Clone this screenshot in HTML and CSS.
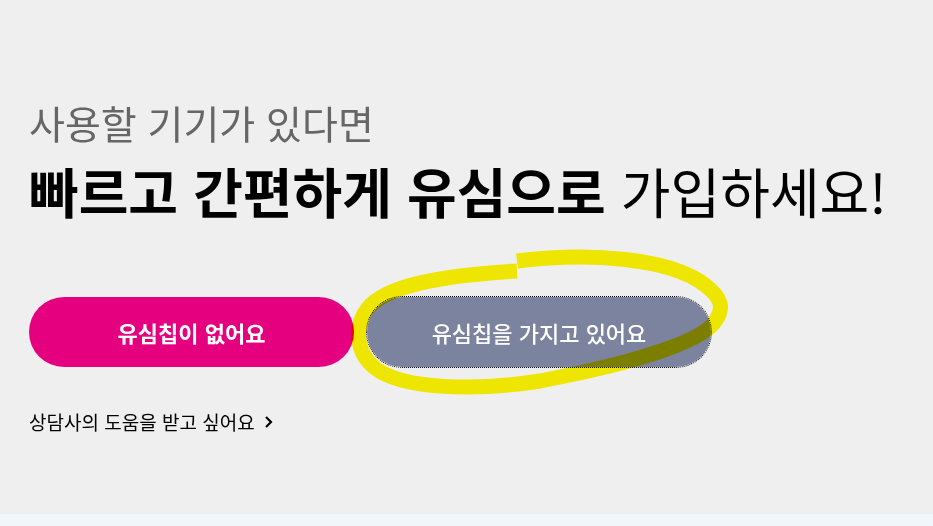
FILE: index.html
```html
<!DOCTYPE html>
<html lang="ko">
	<head>
		<meta charset="UTF-8">
		<title>유심 가입</title>
		<link rel="stylesheet" href="styles.css">
	</head>
	<body>
		<div class="page">
			<div class="join">
				<p class="sub">사용할 기기가 있다면</p>
				<h1 class="title"><b>빠르고 간편하게 유심으로</b> 가입하세요!</h1>

				<div class="btns">
					<a class="btn btn-pink" href="#">유심칩이 없어요</a>
					<div class="mark">
						<a class="btn btn-grey" href="#">유심칩을 가지고 있어요</a>
						<!-- 노란색 동그라미 표시 -->
						<svg class="scribble" width="400" height="160" viewBox="340 240 400 160">
							<path d="M517 261 C590 252 670 258 705 285 C722 298 724 308 716 320 C705 340 640 362 540 381 C470 392 400 388 375 368 C355 352 354 325 368 308 C385 288 430 276 517 271" fill="none" stroke="#fef500" stroke-width="15" stroke-linejoin="round"/>
						</svg>
					</div>
				</div>

				<a class="help" href="#">상담사의 도움을 받고 싶어요
					<svg class="arr" width="9" height="14" viewBox="0 0 9 14"><path d="M2 2 L7 7 L2 12" fill="none" stroke="#000" stroke-width="2.2"/></svg>
				</a>
			</div>
			<div class="foot"></div>
		</div>
	</body>
</html>
```

FILE: styles.css
```css
*{
	margin: 0px;
	padding: 0px;
	box-sizing: border-box;
}

body{
	background-color: #efefef;
	font-family: "Noto Sans CJK KR", "Noto Sans", sans-serif;
	color: #000;
}

.page{
	min-height: 100vh;
	display: flex;
	flex-direction: column;
}

.join{
	flex: 1;
	padding: 95px 29px 0px;
}

/*작은 제목*/
.sub{
	font-size: 39px;
	line-height: 54px;
	color: #666;
	font-weight: 400;
}

/*큰 제목*/
.title{
	font-size: 54px;
	line-height: 74px;
	font-weight: 400;
	margin-top: 5px;
}

.title b{
	font-weight: 700;
}

/*버튼*/
.btns{
	display: flex;
	gap: 13px;
	margin-top: 69px;
}

.btn{
	display: flex;
	align-items: center;
	justify-content: center;
	height: 70px;
	border-radius: 35px;
	color: #fff;
	font-size: 22px;
	font-weight: 700;
	text-decoration: none;
}

.btn-pink{
	width: 325px;
	background-color: #e4007f;
}

.btn-grey{
	width: 344px;
	background-color: #7c839e;
	outline: 1px dotted #000;
	font-weight: 500;
}

.mark{
	position: relative;
}

.scribble{
	position: absolute;
	left: -27px;
	top: -57px;
	mix-blend-mode: multiply;
	pointer-events: none;
}

/*상담사 링크*/
.help{
	display: inline-flex;
	align-items: center;
	gap: 9px;
	margin-top: 42px;
	font-size: 19px;
	line-height: 26px;
	color: #000;
	text-decoration: none;
}

.foot{
	height: 12px;
	background-color: #f0f6f9;
}
```
